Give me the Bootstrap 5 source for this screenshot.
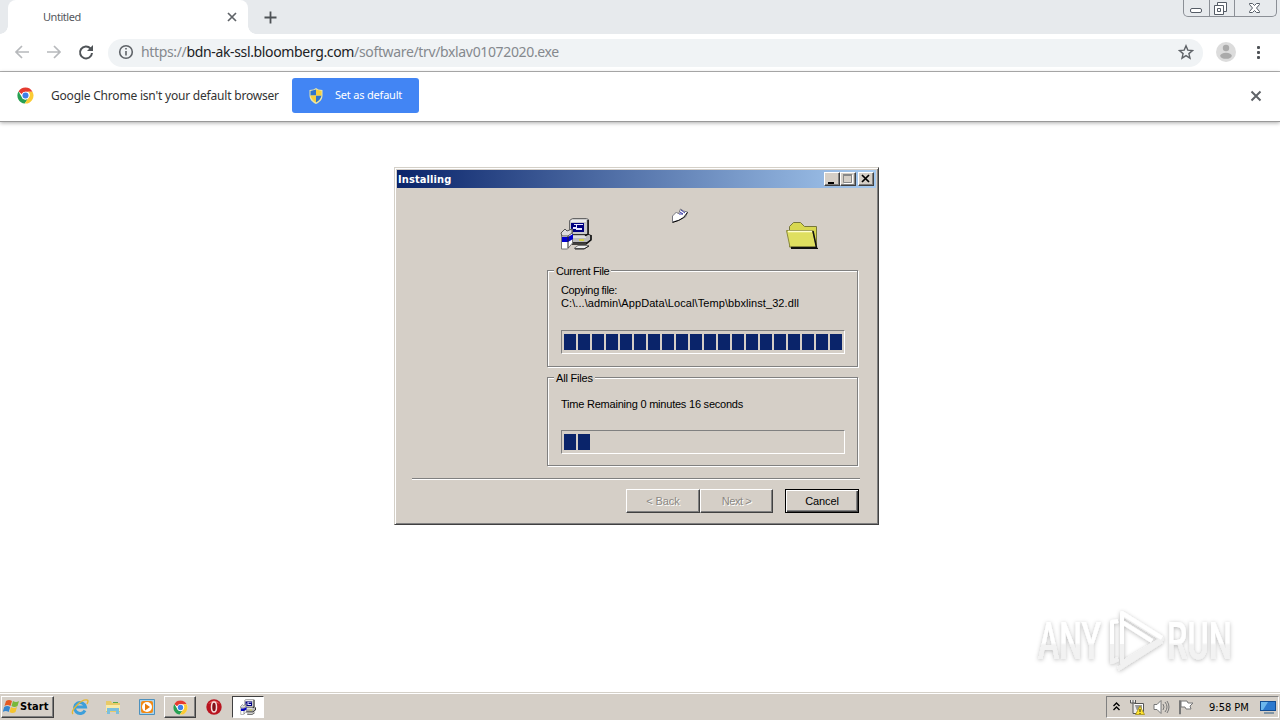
<!DOCTYPE html>
<html lang="en">
<head>
<meta charset="utf-8">
<meta name="viewport" content="width=device-width, initial-scale=1">
<title>Untitled</title>
<link href="https://cdn.jsdelivr.net/npm/bootstrap@5.3.0/dist/css/bootstrap.min.css" rel="stylesheet">
<style>
body{width:1280px;height:720px;overflow:hidden;background:#fff;font-family:"Noto Sans","Open Sans",sans-serif;font-size:12px;line-height:16px;color:#333}
svg{display:block;flex:none}
.tabstrip{height:34px;background:#e7eaed;padding-left:8px}
.tab{width:240px;height:34px;background:#fff;border-radius:8px 8px 0 0;padding:0 10px 0 35px;font-size:11px;letter-spacing:-.45px;color:#55585c}
.tab:before,.tab:after{content:"";position:absolute;bottom:0;width:8px;height:8px}
.tab:before{left:-8px;background:radial-gradient(circle at 0 0,#e7eaed 7.5px,#fff 8px)}
.tab:after{right:-8px;background:radial-gradient(circle at 100% 0,#e7eaed 7.5px,#fff 8px)}
.wincontrols{width:94px;height:17px;margin-right:3px;border:1px solid #8b8f96;border-top:0;border-radius:0 0 5px 5px}
.toolbar{height:38px;border-bottom:1px solid #b3b3b3;padding-left:14px}
.address{width:1095px;height:28px;border-radius:14px;background:#f0f3f5;padding:0 9px 0 10px;font-size:14px;color:#85898e}
.address b{font-weight:400;color:#202124}
.address .url{letter-spacing:-.35px;margin-top:-2px}
.infobar{height:50px;border-bottom:1px solid #999;box-shadow:0 1px 4px #0005;padding:0 0 2px 17px}
.msg{font-size:12px;width:241px;white-space:nowrap;letter-spacing:-.2px}
.default-btn{width:127px;height:35px;background:#4285f4;border-radius:3px;color:#fff;font-size:11px;letter-spacing:-.2px;padding:0 0 0 17px}
.page{height:570px}
.dialog-win{width:485px;height:358px;margin:45px 0 0 394px;background:#d5cfc7;border:1px solid;border-color:#d4d0c8 #404040 #404040 #d4d0c8;box-shadow:inset 1px 1px #fff,inset -1px -1px #808080;padding:2px;font:11px/13px "Liberation Sans",sans-serif;color:#000}
.caption{height:18px;background:linear-gradient(90deg,#0a246a,#a6caf0);color:#fff;font:bold 11px/18px "DejaVu Sans Condensed","DejaVu Sans",sans-serif;letter-spacing:.1px;padding:0 2px 0 1px}
.raised{background:#d5cfc7;border:1px solid;border-color:#fff #404040 #404040 #fff;box-shadow:inset -1px -1px #808080}
.capbtn{width:16px;height:14px}
.work{padding:0 16px 0 15px}
.icons{height:82px;padding-left:148px}
.groupbox{width:311px;margin-left:135px;border:1px solid #808080;box-shadow:1px 1px #fff,inset 1px 1px #fff;padding:0 13px}
.groupbox .title{position:absolute;top:-6px;left:6px;background:#d5cfc7;padding:0 2px;letter-spacing:-.35px}
.tight{letter-spacing:-.22px}
.path{letter-spacing:.08px}
.meter{width:284px;height:24px;border:1px solid;border-color:#808080 #fff #fff #808080;padding:3px 2px;gap:2px}
.meter i{width:12px;height:16px;background:#0a246a}
.rule{width:448px;height:2px;border-top:1px solid #808080;border-bottom:1px solid #fff;margin:12px 0 9px}
.dlgbtn{width:74px;height:24px;font:11px/13px "Liberation Sans",sans-serif;padding:0;letter-spacing:-.1px}
.dlgbtn.off{color:#8b8883;text-shadow:1px 1px #fff}
.dlgbtn.primary{border:1px solid #000;box-shadow:inset 1px 1px #fff,inset -1px -1px #404040,inset -2px -2px #808080}
.taskbar{height:28px;background:#d5cfc7;border-top:1px solid #d4d0c8;box-shadow:inset 0 1px #fff;padding:3px 1px 1px;font:11px/14px "DejaVu Sans Condensed","DejaVu Sans",sans-serif;color:#000}
.start{width:53px;height:22px;font-weight:bold;gap:0;letter-spacing:.1px;padding-left:1px}
.slot{width:33px;height:22px}
.active-slot{background:#fff;border:1px solid;border-color:#404040 #fff #fff #404040}
.tray{width:173px;height:22px;border:1px solid;border-color:#808080 #fff #fff #808080;padding-left:6px}
.watermark{left:1034px;top:604px}
</style>
</head>
<body class="d-flex flex-column position-relative">
<svg width="0" height="0" class="position-absolute">
<defs>
<symbol id="chrome" viewBox="0 0 18 18"><circle cx="9" cy="9" r="8.5" fill="#fff"/><path fill="#e53b30" d="M1.600 4.700A8.500 8.500 0 0 1 16.400 5H9a4 4 0 0 0-3.800 2.800z"/><path fill="#27a052" d="M1.600 4.700A8.500 8.500 0 0 0 8.200 17.500l3.500-5.200A4 4 0 0 1 5 10.500z"/><path fill="#fbcb34" d="M16.400 5A8.500 8.500 0 0 1 8.200 17.500l4-6A4 4 0 0 0 11.500 5z"/><circle cx="9" cy="9" r="4" fill="#fff"/><circle cx="9" cy="9" r="3.200" fill="#3d7fe8"/></symbol>
<symbol id="setup" viewBox="0 0 32 32"><path fill="#c9c9c9" stroke="#666" d="M9.500 2.500l3-2h14l2 1v14l-3 3h-16z"/><path fill="#eee" d="M11 2h15v2H11z"/><path fill="#000080" d="M11 5h13v9H11z"/><path fill="#e8e8ff" d="M14 6h9v1h-9zM13 9h3v-2h1v3h5v2h-6v-1h-3z"/><path fill="#bbb" stroke="#333" d="M10 18.500l3-2h16l2 1v4l-4 3H10z"/><path stroke="#111" stroke-width="1.500" fill="none" d="M28 2v14l-3 2M31 17v5l-5 4H12"/><path stroke="#fff" d="M12 19h14"/><path stroke="#ddd820" stroke-width="1.500" d="M19 22h5"/><path fill="#eee" stroke="#777" d="M18 27.500h11l-4 3H14z"/><path stroke="#222" d="M15 31h9l5-3" fill="none"/><path fill="#fff" stroke="#777" d="M1.500 16l7-2 4-3v14l-5 6h-6z"/><path fill="#ddd" stroke="#555" d="M1 15l4-4 2 2 5-2v4l-4 3H2z"/><path fill="#0000cf" d="M2 19h6l5-3v5l-5 3H2z"/><path stroke="#222" d="M8 18v12"/></symbol>
</defs></svg>

<header>
<div class="tabstrip d-flex">
 <div class="tab position-relative d-flex align-items-center justify-content-between"><span>Untitled</span><svg width="12" height="12" viewBox="0 0 12 12" stroke="#5f6368" stroke-width="1.700"><path d="M2 2l8 8M10 2l-8 8"/></svg></div>
 <svg class="ms-3 align-self-center" width="13" height="13" viewBox="0 0 13 13" stroke="#4e5256" stroke-width="1.800"><path d="M6.500 .5v12M.5 6.500h12"/></svg>
 <svg class="ms-auto wincontrols" viewBox="0 0 92 16" fill="none" stroke="#555c66"><path stroke="#8b8f96" d="M25.500 0v16M50.500 0v16"/><rect x="6.500" y="8.500" width="11" height="4" rx="1.500" fill="#fff"/><path fill="#fff" d="M33.500 2.500h9v9h-9z"/><path fill="#fff" d="M30.500 5.500h9v9h-9z"/><path d="M33.500 8.500h3v3h-3z"/><path fill="#fff" d="M65.500 3.500h3l2 2 2-2h3v1l-3 3.500 3 3.500v1h-3l-2-2-2 2h-3v-1l3-3.500-3-3.500z"/></svg>
</div>
<div class="toolbar d-flex align-items-center">
 <svg width="80" height="18" viewBox="0 0 80 18" fill="none" stroke="#b7b9bc" stroke-width="1.700"><path d="M15 8H2M8 2L2 8l6 6M33 8h13M40 2l6 6-6 6"/><g stroke="#505458" stroke-width="2"><path d="M76.500 4.500A6 6 0 1 0 78 9"/></g><path stroke="none" fill="#505458" d="M79 1v6h-6z"/></svg>
 <div class="address d-flex align-items-center" style="margin-left:14px"><svg style="margin-top:-2px" width="16" height="16" viewBox="0 0 16 16" fill="none" stroke="#5f6368" stroke-width="1.600"><circle cx="8" cy="8" r="6.300"/><path d="M8 7v4.500M8 4v1.600"/></svg><span class="url text-nowrap" style="margin-left:7px">https://<b>bdn-ak-ssl.bloomberg.com</b>/software/trv/bxlav01072020.exe</span><svg class="ms-auto" style="margin-top:-2px" width="16" height="16" viewBox="0 0 16 16" fill="none" stroke="#5f6368" stroke-width="1.400"><path d="M8 1.800l1.800 4.300 4.700.4-3.600 3.100 1.100 4.600L8 11.700l-4 2.500 1.100-4.600-3.600-3.100 4.700-.4z"/></svg></div>
 <svg style="margin:-2px 0 0 13px" width="20" height="20" viewBox="0 0 20 20"><circle cx="10" cy="10" r="10" fill="#dcdcdc"/><g fill="#aaa"><circle cx="10" cy="6" r="3.200"/><ellipse cx="10" cy="13.800" rx="5.800" ry="3"/></g></svg>
 <svg style="margin-left:20px" width="5" height="15" viewBox="0 0 5 15" fill="#4e5256"><rect x="1" y="1" width="3" height="3" rx="1"/><rect x="1" y="6" width="3" height="3" rx="1"/><rect x="1" y="11" width="3" height="3" rx="1"/></svg>
</div>
<div class="infobar d-flex align-items-center">
 <svg width="17" height="17"><use href="#chrome"/></svg><span class="msg" style="margin-left:17px">Google Chrome isn't your default browser</span>
 <button class="default-btn btn d-flex align-items-center border-0" type="button"><svg width="14" height="16" viewBox="0 0 14 16"><path fill="#e9e6a8" d="M7 0l2.500 1.500 4 .5v5.500C13.500 12 10 14.500 7 16 4 14.500.5 12 .5 7.500V2l4-.5z"/><path fill="#2f75ca" d="M7 1.500v6H1.500V3zM7 7.500h5.500C12 11 9.500 13 7 14.500z"/><path fill="#f6cf3a" d="M7 1.500L12.500 3v4.500H7zM1.500 7.500H7v7C4.500 13 2 11 1.500 7.500z"/></svg><span class="setlabel" style="margin-left:12px">Set as default</span></button>
 <svg class="ms-auto" style="margin-right:18px" width="12" height="12" viewBox="0 0 12 12" stroke="#5f6368" stroke-width="2"><path d="M1.500 1.500l9 9M10.500 1.500l-9 9"/></svg>
</div>
</header>

<main class="page">
<section class="dialog-win">
 <div class="caption d-flex align-items-center"><span class="me-auto" style="padding-top:2px">Installing</span>
  <svg class="raised capbtn" viewBox="0 0 14 12"><path d="M3 9h6v2H3z"/></svg>
  <svg class="raised capbtn" viewBox="0 0 14 12" fill="none" stroke="#888"><path d="M2.500 1.500h8v8h-8z"/><path d="M2 2h9" stroke-width="2"/><path stroke="#fff" d="M3 10.500h8.500V2"/></svg>
  <svg class="raised capbtn" style="margin-left:2px" viewBox="0 0 14 12" stroke="#000" stroke-width="1.700"><path d="M3 2l7 7M10 2L3 9"/></svg>
 </div>
 <div class="work">
  <div class="icons d-flex align-items-start">
   <svg style="margin-top:30px" width="32" height="32"><use href="#setup"/></svg>
   <svg style="margin:20px 0 0 80px" width="16" height="15" viewBox="0 0 16 15"><path fill="#fff" stroke="#77777f" d="M.5 14V8l4-4 2 2 2-5 3 2 4 1-2 5-6 3z"/><path fill="none" stroke="#000" d="M.5 14.500l6-2 5-3 4-5"/><path stroke="#3a3aaa" d="M8 4l3 2M9 2l4 3M7 6h4"/></svg>
   <svg style="margin:33px 0 0 98px" width="33" height="29" viewBox="0 0 33 29"><path fill="#d8d850" stroke="#77773a" d="M3.500 26V5.500l4-4h7l4 4h12v20z"/><path fill="#111" d="M30 6h2v21H5v1h27V6z"/><path fill="#dfdf60" stroke="#89893c" d="M.5 9.500h26l4 16.500H4z"/><path stroke="#fffdd0" stroke-width="1.500" d="M2 10.500h24"/><path d="M27 10l3.500 16.500H5" fill="none" stroke="#111" stroke-width="1.500"/></svg>
  </div>
  <div class="groupbox position-relative" style="height:97px"><span class="title">Current File</span>
   <div class="text-nowrap" style="padding-top:13px;height:59px"><span class="title-line" style="letter-spacing:-.35px">Copying file:</span><br><span class="path">C:\...\admin\AppData\Local\Temp\bbxlinst_32.dll</span></div>
   <div class="meter d-flex"><i></i><i></i><i></i><i></i><i></i><i></i><i></i><i></i><i></i><i></i><i></i><i></i><i></i><i></i><i></i><i></i><i></i><i></i><i></i><i></i></div>
  </div>
  <div class="groupbox position-relative" style="height:89px;margin-top:10px"><span class="title" style="letter-spacing:-.2px">All Files</span>
   <div class="text-nowrap tight" style="padding-top:20px;height:52px">Time Remaining 0 minutes 16 seconds</div>
   <div class="meter d-flex"><i></i><i></i></div>
  </div>
  <div class="rule"></div>
  <div class="d-flex" style="padding-left:214px"><button class="raised dlgbtn off" disabled>&lt; Back</button><button class="raised dlgbtn off" style="width:73px" disabled><span style="letter-spacing:-.4px">Next &gt;</span></button><button class="raised dlgbtn primary" style="margin-left:12px">Cancel</button></div>
 </div>
</section>
</main>

<footer class="taskbar d-flex">
 <div class="raised start d-flex align-items-center"><svg width="17" height="16" viewBox="0 0 17 16"><path fill="#e45a22" d="M3 2q3-2 6 0L7.500 7q-3-2-6 0z"/><path fill="#78b83a" d="M10 2q3 2 6 0l-1.500 5q-3 2-6 0z"/><path fill="#3586cf" d="M1.200 8q3-2 6 0l-1.500 5q-3-2-6 0z"/><path fill="#f4c42f" d="M8 8q3 2 6 0l-1.500 5q-3 2-6 0z"/></svg>Start</div>
 <div class="slot d-flex align-items-center justify-content-center" style="margin-left:9px"><svg width="18" height="18" viewBox="0 0 18 18" fill="none"><path stroke="#3d9fda" stroke-width="3" d="M14 12.500A5.500 5.500 0 1 1 14.500 9H4.500"/><path stroke="#e6b832" stroke-width="1.400" d="M2 16C-1 13 10 1 16 2q2 0 0 4"/></svg></div>
 <div class="slot d-flex align-items-center justify-content-center"><svg width="16" height="16" viewBox="0 0 16 16"><path fill="#e8ca67" d="M1 2h5l1 2h8v9H1z"/><path fill="#f9eaa8" d="M1 6h14v6H1z"/><path fill="#7cbfdc" d="M2 9h12v6h-3v-3H5v3H2z"/><path fill="#58a84b" d="M8 3h5v1H8z"/></svg></div>
 <div class="slot d-flex align-items-center justify-content-center" style="width:35px"><svg width="16" height="16" viewBox="0 0 16 16"><path fill="#a9d4ee" stroke="#4d91bd" d="M.5.5h15v15H.5z"/><rect x="2" y="2" width="12" height="12" rx="2" fill="#f28a15"/><circle cx="8" cy="8" r="5" fill="#fff"/><path fill="#e77b0c" d="M6 4.500L11 8l-5 3.500z"/></svg></div>
 <div class="slot raised d-flex align-items-center justify-content-center" style="width:32px"><svg width="15" height="15"><use href="#chrome"/></svg></div>
 <div class="slot d-flex align-items-center justify-content-center" style="width:36px"><svg width="16" height="16" viewBox="0 0 16 16"><circle cx="8" cy="8" r="7.700" fill="#b91520"/><path fill="#e55a58" d="M2 5q6-7 12 0-6-3-12 0"/><ellipse cx="8" cy="8" rx="2.500" ry="5" fill="#831018" stroke="#f4dddd" stroke-width="1.500"/></svg></div>
 <div class="slot active-slot d-flex align-items-center justify-content-center" style="width:32px"><svg width="16" height="16"><use href="#setup"/></svg></div>
 <div class="tray d-flex align-items-center ms-auto">
  <svg width="7" height="10" viewBox="0 0 7 10" fill="none" stroke="#000" stroke-width="1.400"><path d="M.5 4l3-3 3 3M.5 8l3-3 3 3"/></svg>
  <svg style="margin-left:9px" width="16" height="16" viewBox="0 0 16 16"><path fill="#fff" stroke="#555" d="M4.500 4.500h10v8h-10z"/><path fill="#999" d="M6 6h7v5H6z"/><path fill="#eee" stroke="#555" d="M1.500 1v3h5V1M4 1v13.500h5"/><path fill="#ffe32e" stroke="#9b850c" stroke-width=".7" d="M11 7l4.500 8.500h-9z"/><path stroke="#222" d="M11 10v3M11 14v1"/></svg>
  <svg style="margin-left:8px" width="17" height="16" viewBox="0 0 17 16" fill="none" stroke="#777"><path fill="#fff" d="M1 5.500h3l4-4v13l-4-4H1z"/><path d="M10 5q2 3 0 6M12 3q4 5 0 10M14 2q4 6 0 12"/></svg>
  <svg style="margin-left:8px" width="16" height="16" viewBox="0 0 16 16" fill="#fff" stroke="#777"><path d="M1.500 15V1.500h1V15zM3 2h6l1 2h5l-3 3 1 3H8L7 8H3z"/></svg>
  <span class="clock text-nowrap" style="margin:1px 0 0 15px;width:46px">9:58 PM</span>
  <svg style="margin-left:5px" width="16" height="15" viewBox="0 0 16 15"><path fill="#124c92" d="M0 1h16v10H0z"/><path fill="#2b78ce" d="M1 2h14v8H1z"/><path fill="#6bb6ed" d="M1 2h7L3 10H1z"/><path fill="#8195a5" d="M4 12h10v2H4z"/></svg>
 </div>
</footer>

<svg class="watermark position-absolute" width="230" height="80" viewBox="0 0 230 80">
<defs><filter id="soft" x="-10%" y="-10%" width="120%" height="130%"><feDropShadow dx="0" dy="1" stdDeviation="2" flood-color="#000" flood-opacity=".28"/></filter><linearGradient id="fade" x2="0" y2="1"><stop offset=".52" stop-color="#fff"/><stop offset=".56" stop-color="#f2f2f2"/></linearGradient></defs>
<g filter="url(#soft)"><g fill="url(#fade)" font-family="Roboto,sans-serif" font-weight="500" font-size="51"><text x="4" y="55" textLength="63" lengthAdjust="spacingAndGlyphs">ANY</text><text x="133" y="55" textLength="65" lengthAdjust="spacingAndGlyphs">RUN</text></g>
<g fill="none" stroke-linejoin="round" stroke-width="4"><path stroke="#f1f1f1" d="M88 48V10l40 25-40 24V18M78 18v40l6-3M84 65l44-28"/><path stroke="#fff" d="M88 40V9l40 25M88 18l30 19M78 40V18l6-1"/></g></g>
</svg>
<script src="https://cdn.jsdelivr.net/npm/bootstrap@5.3.0/dist/js/bootstrap.bundle.min.js"></script>
</body>
</html>
